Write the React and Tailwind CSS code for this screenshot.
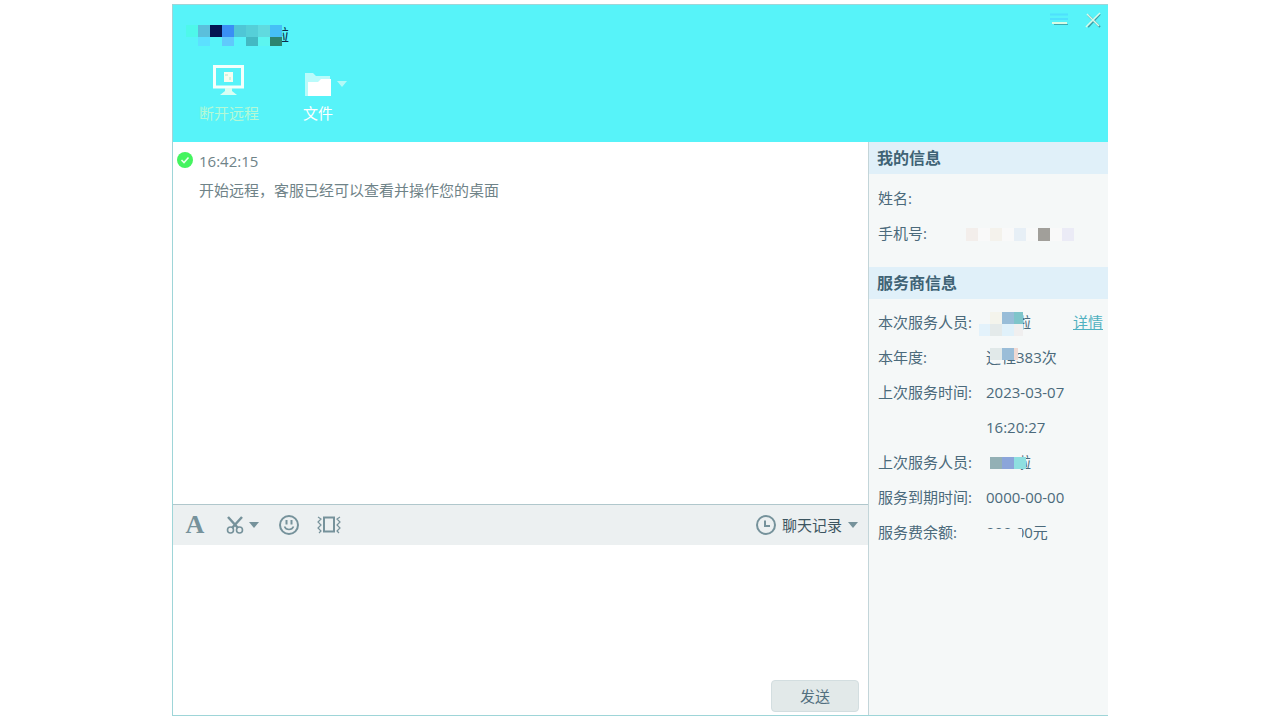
import React, { useState } from "react";

const Caret = ({ className }) => (
  <svg width="10" height="6" viewBox="0 0 10 6" className={className} aria-hidden="true">
    <path d="M0 0h10L5 6z" fill="currentColor" />
  </svg>
);

// Pixelated blocks that hide private values. Each cell is [x, y, w, h, color]
const Mosaic = ({ cells, width, height, className }) => (
  <svg
    width={width}
    height={height}
    viewBox={`0 0 ${width} ${height}`}
    className={className}
    shapeRendering="crispEdges"
    aria-hidden="true"
  >
    {cells.map(([x, y, w, h, color], i) => (
      <rect key={i} x={x} y={y} width={w} height={h} fill={color} />
    ))}
  </svg>
);

const titleCells = [
  [0, 0, 12, 12, "#4ef8ea"],
  [12, 0, 12, 12, "#5bbfdb"],
  [24, 0, 12, 12, "#041552"],
  [36, 0, 12, 12, "#3a8ff5"],
  [48, 0, 12, 12, "#4fc6d6"],
  [60, 0, 12, 12, "#55cfd8"],
  [72, 0, 12, 12, "#60dadf"],
  [84, 0, 12, 12, "#46bff6"],
  [12, 12, 12, 9, "#5ce0ff"],
  [24, 12, 12, 9, "#57f3f9"],
  [36, 12, 12, 9, "#60c9fc"],
  [48, 12, 12, 9, "#57f3f9"],
  [60, 12, 12, 9, "#43b9c3"],
  [72, 12, 12, 9, "#5cf5f0"],
  [84, 12, 12, 9, "#2d8470"],
];

const phoneCells = [
  [0, 0, 12, 13, "#f3eeeb"],
  [12, 0, 12, 13, "#f9f9f9"],
  [24, 0, 12, 13, "#f4f2ec"],
  [36, 0, 12, 13, "#f9f9f9"],
  [48, 0, 12, 13, "#e7eff6"],
  [60, 0, 12, 13, "#f8f9f9"],
  [72, 0, 12, 13, "#a19f9a"],
  [84, 0, 12, 13, "#f9f9f9"],
  [96, 0, 12, 13, "#ebebf6"],
];

const staffCells = [
  [11, 0, 12, 12, "#f4f4ec"],
  [23, 0, 12, 12, "#98bdd8"],
  [35, 0, 9, 12, "#7fc5ca"],
  [0, 12, 11, 12, "#e3f2fb"],
  [11, 12, 12, 12, "#e4eaea"],
  [23, 12, 12, 12, "#e0f1fa"],
  [35, 12, 9, 12, "#f0efef"],
];

const yearCells = [
  [0, 0, 12, 12, "#e1e9e9"],
  [12, 0, 12, 12, "#9abdd8"],
  [24, 0, 4, 12, "#f0d9d3"],
  [0, 12, 14, 2, "#f5f8f8"],
];

const lastStaffCells = [
  [0, 0, 12, 12, "#93b0b5"],
  [12, 0, 12, 12, "#8ba5da"],
  [24, 0, 12, 12, "#8edfe0"],
];

const balanceCells = [[0, 0, 36, 12, "#f5f8f8"]];

const SectionTitle = ({ children }) => (
  <h2 className="bg-[#e0f0f9] px-2 text-base leading-8 font-bold text-[#3f6375]">{children}</h2>
);

const InfoRow = ({ label, children }) => (
  <div className="flex leading-[35px]">
    <dt className="w-[108px] shrink-0">{label}</dt>
    <dd className="relative flex flex-1 justify-between">{children}</dd>
  </div>
);

const Header = () => (
  <header className="bg-[#57f3f9] pb-[19px] pl-[26px]">
    <div className="flex h-10 items-end justify-between">
      <h1 className="relative pl-[74px] text-base leading-5 text-[#0b2a4a]">
        啦
        <Mosaic cells={titleCells} width={96} height={21} className="absolute top-0 -left-[13px]" />
      </h1>
      <div className="flex gap-4 self-start pt-1.5 pr-1.5 text-[#e4fdf4]">
        <button type="button" aria-label="最小化">
          <svg width="18" height="18" viewBox="0 0 18 18">
            <path d="M0 3.5h18M0 8h18" stroke="#4fe0fd" strokeWidth="2" />
            <path d="M2 12h15" stroke="#d8fbe4" strokeWidth="2" />
            <path d="M4 13.5h14" stroke="#3fa9b0" strokeWidth="1" />
          </svg>
        </button>
        <button type="button" aria-label="关闭">
          <svg width="18" height="18" viewBox="0 0 18 18">
            <path d="M4 4l12 12M16 3L4 16" stroke="#3a9ea8" strokeWidth="2" />
            <path d="M3 3l12 12M16 2L2 16" stroke="#d9fbea" strokeWidth="1.6" />
          </svg>
        </button>
      </div>
    </div>

    <div className="mt-5 flex gap-11 text-[15px] leading-5">
      <button type="button" className="flex flex-col items-center gap-1.5 text-[#b4f9d6]">
        <svg width="32" height="32" viewBox="0 0 32 32">
          <path d="M1.5 1.5h28v20.5h-28z" fill="none" stroke="#f4fffb" strokeWidth="3" />
          <path d="M11 7h9v10h-9z" fill="#f6fdf0" />
          <path d="M12 9h3v2h-3zM16 12h2v3h-2z" fill="#d3f3dd" />
          <path d="M12 23h7v3l5 4H7l5-4z" fill="#d9fff4" />
        </svg>
        <span>断开远程</span>
      </button>
      <button type="button" className="flex items-start gap-1 text-white">
        <span className="flex flex-col items-center gap-1.5">
          <svg width="28" height="32" viewBox="0 0 28 32">
            <path d="M1 31V8h8l3 3h14v5H16l-3 3H6v12z" fill="#b9fbfb" />
            <path d="M4 31V17h10l3-3h10v17z" fill="#fff" />
          </svg>
          <span>文件</span>
        </span>
        <Caret className="mt-4 text-[#b4f9f6]" />
      </button>
    </div>
  </header>
);

const EditorBar = () => (
  <div className="flex h-[41px] items-center justify-between border-t border-[#b0c7cc] bg-[#ecf0f1] pr-2.5 pl-3 text-[#76929b]">
    <div className="flex items-center">
      <button type="button" aria-label="字体" className="w-5 text-center font-['Liberation_Serif',serif] text-[26px] leading-8 font-bold">
        A
      </button>
      <button type="button" aria-label="截图" className="ml-5 flex items-center gap-1">
        <svg width="20" height="20" viewBox="0 0 20 20" fill="none" stroke="currentColor">
          <path d="M3 2l10 11M17 2L7 13" strokeWidth="2.5" />
          <circle cx="5.5" cy="15" r="3" strokeWidth="1.6" />
          <circle cx="14.5" cy="15" r="3" strokeWidth="1.6" />
        </svg>
        <Caret />
      </button>
      <button type="button" aria-label="表情" className="ml-5">
        <svg width="20" height="20" viewBox="0 0 20 20" fill="none" stroke="currentColor">
          <circle cx="10" cy="10" r="9" strokeWidth="2" />
          <path d="M7.5 5v4.5M12.5 5v4.5" strokeWidth="2" />
          <path d="M5.5 11.5c1.5 4 7.5 4 9 0" strokeWidth="1.6" />
        </svg>
      </button>
      <button type="button" aria-label="抖动" className="ml-[18px]">
        <svg width="24" height="20" viewBox="0 0 24 20" fill="none" stroke="currentColor">
          <path d="M7 2.5h10v14H7z" strokeWidth="2" />
          <path d="M1 2l3 2-3 3 3 3-3 3 3 3-2 2M23 2l-3 2 3 3-3 3 3 3-3 3 2 2" strokeWidth="1.2" />
        </svg>
      </button>
    </div>
    <button type="button" className="flex items-center gap-1.5">
      <svg width="20" height="20" viewBox="0 0 20 20" fill="none" stroke="currentColor" strokeWidth="2">
        <circle cx="10" cy="10" r="9" />
        <path d="M9 5.5v5.5h5" />
      </svg>
      <span className="text-[15px] text-[#3c5560]">聊天记录</span>
      <Caret />
    </button>
  </div>
);

const Sidebar = () => (
  <aside className="w-60 shrink-0 border-l border-[#c3d5d9] bg-[#f5f8f8] text-[15px] text-[#4b6a7b]">
    <SectionTitle>我的信息</SectionTitle>
    <dl className="pt-[7px] pb-4 pl-[9px]">
      <InfoRow label="姓名:" />
      <InfoRow label="手机号:">
        <Mosaic cells={phoneCells} width={108} height={13} className="absolute top-3 -left-5" />
      </InfoRow>
    </dl>
    <SectionTitle>服务商信息</SectionTitle>
    <dl className="pt-1.5 pl-[9px]">
      <InfoRow label="本次服务人员:">
        <span className="pl-[30px]">啦</span>
        <Mosaic cells={staffCells} width={44} height={24} className="absolute top-[7px] -left-[7px]" />
        <a href="#detail" className="pr-[5px] text-[#4fb0c0] underline">
          详情
        </a>
      </InfoRow>
      <InfoRow label="本年度:">
        <span>远程383次</span>
        <Mosaic cells={yearCells} width={28} height={14} className="absolute top-2 left-1" />
      </InfoRow>
      <InfoRow label="上次服务时间:">
        <span>
          2023-03-07
          <br />
          16:20:27
        </span>
      </InfoRow>
      <InfoRow label="上次服务人员:">
        <span className="pl-[30px]">啦</span>
        <Mosaic cells={lastStaffCells} width={40} height={12} className="absolute top-3 left-1" />
      </InfoRow>
      <InfoRow label="服务到期时间:">
        <span>0000-00-00</span>
      </InfoRow>
      <InfoRow label="服务费余额:">
        <span>000.00元</span>
        <Mosaic cells={balanceCells} width={36} height={12} className="absolute top-[14px] left-0" />
      </InfoRow>
    </dl>
  </aside>
);

const App = () => {
  const [message, setMessage] = useState("");

  function handleSubmit(e) {
    e.preventDefault();
    setMessage("");
  }

  return (
    <div className="flex min-h-screen flex-col bg-white py-1 font-['Open_Sans','Noto_Sans_CJK_SC',sans-serif]">
      <div className="mx-auto flex w-full max-w-[936px] flex-1 flex-col border border-r-0 border-[#9ed5d8]">
        <Header />

        <div className="flex flex-1">
          <main className="flex min-w-0 flex-1 flex-col">
            {/* Messages */}
            <section className="flex flex-1 items-start gap-1.5 pt-[9px] pl-1 text-[15px] leading-5 text-[#6f8388]">
              <svg width="16" height="18" viewBox="0 0 16 18" className="shrink-0" aria-hidden="true">
                <circle cx="8" cy="9" r="8" fill="#44f45f" />
                <path d="M4.5 9l2.5 2.5 4.5-5" fill="none" stroke="#e9ffec" strokeWidth="1.6" />
              </svg>
              <div>
                <time className="block">16:42:15</time>
                <p className="mt-[9px]">开始远程，客服已经可以查看并操作您的桌面</p>
              </div>
            </section>

            <EditorBar />

            {/* Message input */}
            <form onSubmit={handleSubmit} className="flex flex-col">
              <textarea
                aria-label="消息"
                value={message}
                onChange={(e) => setMessage(e.target.value)}
                className="h-[135px] w-full resize-none px-3 py-2 text-[15px] outline-none"
              />
              <button
                type="submit"
                className="mr-[9px] mb-[3px] h-8 w-[88px] self-end rounded border border-[#d3dee0] bg-[#e2e9e9] text-[15px] text-[#52707f]"
              >
                发送
              </button>
            </form>
          </main>

          <Sidebar />
        </div>
      </div>
    </div>
  );
};

export default App;
